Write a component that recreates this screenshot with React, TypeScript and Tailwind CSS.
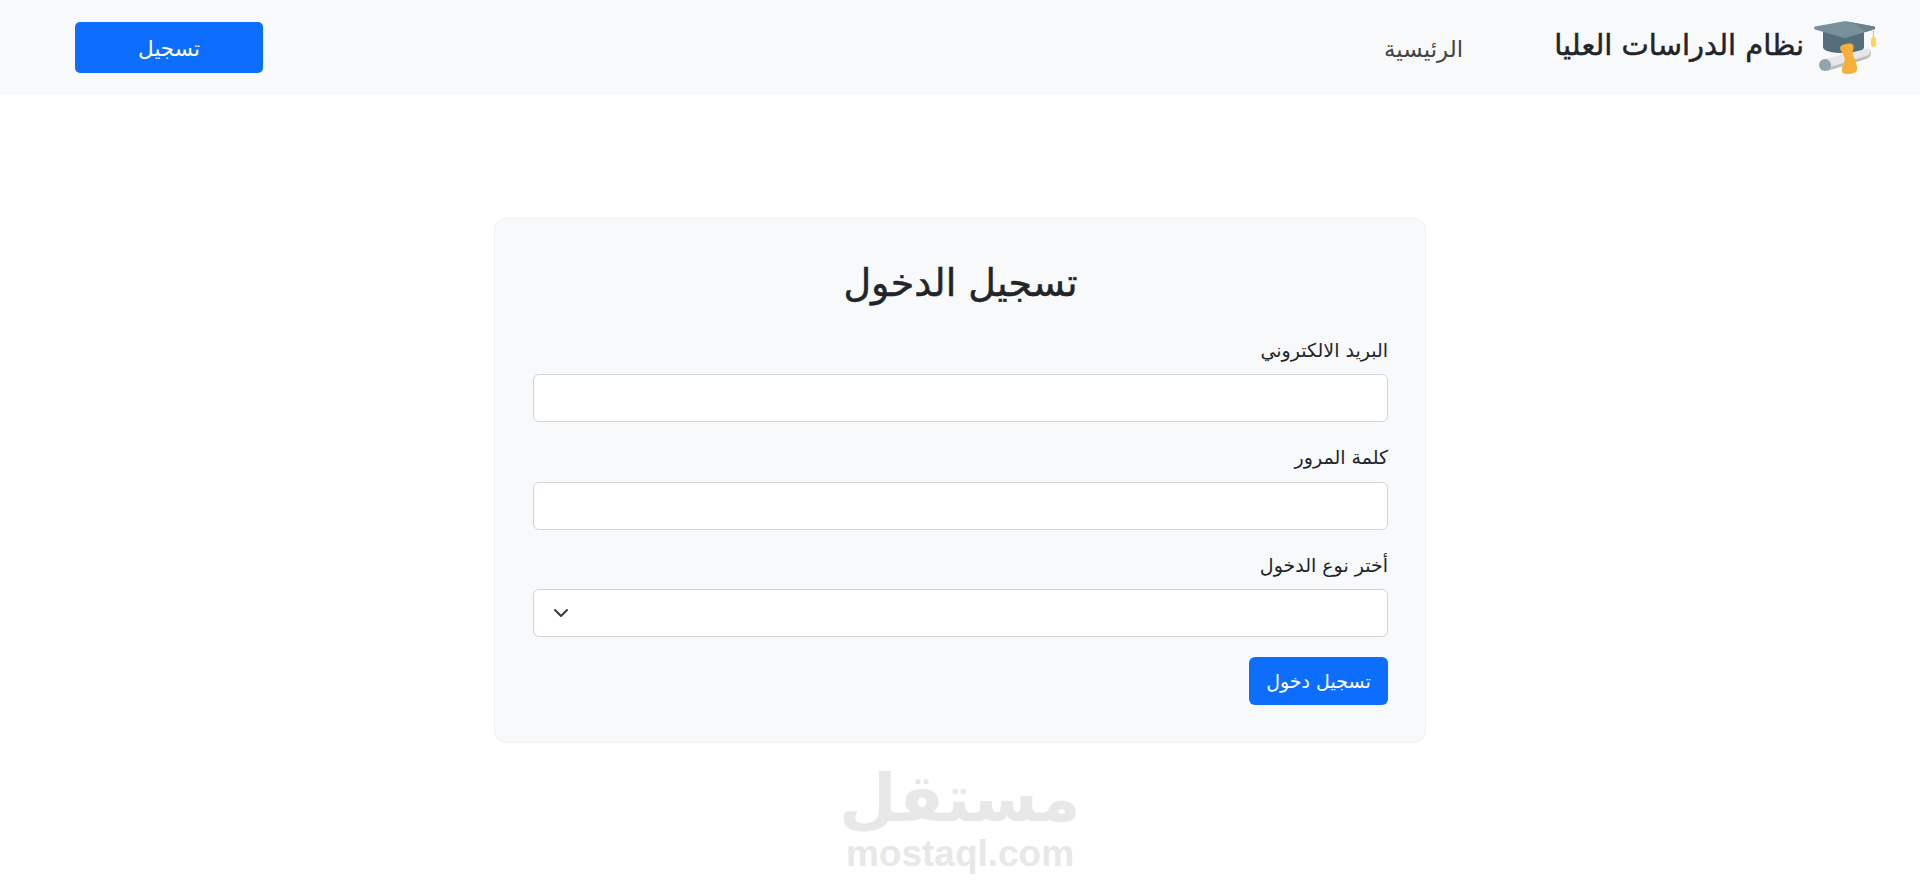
const font = "font-['DejaVu_Sans','Noto_Sans',sans-serif]";

function CapIcon() {
  return (
    <svg width="62" height="54" viewBox="0 0 62 54" className="shrink-0 mt-[1px]">
      <path d="M9 11v15c0 4 9 6 21 6s20-2 20-6V11z" fill="#546e7a" />
      <path d="M1 5.500 29 .5c1.500-.3 3-.3 4.500 0L60 5.500c1.500.5 1.500 2.500 0 3L33 16.500c-1.500.5-3 .5-4.500 0L1 8.500c-1.300-.5-1.300-2.500 0-3z" fill="#78909c" />
      <path d="M33.500.5 60 5.500c1.500.5 1.500 2.500 0 3l-9 2.700C47 6 41 2.500 33.500.5z" fill="#6b838f" />
      <path d="M59.500 8v9" stroke="#ffca28" strokeWidth="1.2" />
      <rect x="57" y="16" width="5" height="10" rx="2.500" fill="#ffd54f" />
      <path d="M11 38 52 28c3-.7 5 1 5 4s-2 5-5 6L13 50z" fill="#e6e6e6" />
      <path d="M13 50 52 38c3-1 5-3 5-6 0-1 0-2-.5-2.500 0 3-2 5-4.500 5.500L13 47z" fill="#bdbdbd" />
      <circle cx="11" cy="44" r="6" fill="#90a4ae" />
      <path d="M27 25c2-2 8-3 11-2 2 1 2 4 1 6-1 3 0 6 2 10 2 5 3 10 1 12-3 2-10 3-13 1-2-2-1-6 1-10 1-3 1-6-1-9-2-3-4-6-2-8z" fill="#f5b03a" />
    </svg>
  );
}

function Field({ label, children }: { label: string; children: React.ReactNode }) {
  return (
    <div className="mb-[16px]">
      <label className="block mb-[5.5px] text-[19px] leading-[38px] text-[#212529]">{label}</label>
      {children}
    </div>
  );
}

export default function App() {
  return (
    <div dir="rtl" className={`${font} min-h-[892px] bg-white text-[#212529] overflow-hidden`}>
      <nav className="h-[95px] bg-[#f8f9fa] flex items-center justify-between pr-[44px] pl-[75px]">
        <div className="flex items-center">
          <a className="flex items-center gap-[10px] text-[29px] text-[#212529] [-webkit-text-stroke:0.5px_#212529]">
            <CapIcon />
            <span className="mb-[4px]">نظام الدراسات العليا</span>
          </a>
          <a className="mr-[91px] text-[23px] text-[#444] mt-[4px]">الرئيسية</a>
        </div>
        <button className="w-[188px] h-[51px] pt-[3px] rounded-[5px] bg-[#0d6efd] text-white text-[21.5px]">تسجيل</button>
      </nav>

      <main className="flex flex-col items-center pt-[123px]">
        <form className="w-[932px] h-[525px] bg-[#f8f9fa] border border-[#eff0f1] rounded-[12px] pl-[38px] pr-[37px] pt-[42px]">
          <h1 className="text-center text-[38px] leading-[44px] mb-[25.5px] [-webkit-text-stroke:0.5px_#212529]">تسجيل الدخول</h1>
          <Field label="البريد الالكتروني">
            <input className="block w-full h-[48px] bg-white border border-[#ced4da] rounded-[6px]" />
          </Field>
          <Field label="كلمة المرور">
            <input type="password" className="block w-full h-[48px] bg-white border border-[#ced4da] rounded-[6px]" />
          </Field>
          <Field label="أختر نوع الدخول">
            <div className="flex items-center justify-end w-full h-[48px] bg-white border border-[#ced4da] rounded-[6px] pl-[19px]">
              <svg width="16" height="16" viewBox="0 0 16 16">
                <path d="M2 5l6 6 6-6" fill="none" stroke="#343a40" strokeWidth="2" strokeLinecap="round" strokeLinejoin="round" />
              </svg>
            </div>
          </Field>
          <button type="button" className="h-[48px] w-[139px] mt-[4px] rounded-[6px] bg-[#0d6efd] text-white text-[19px]">تسجيل دخول</button>
        </form>

        <div className="mt-[21px] flex flex-col items-center text-[#e8e8e8] select-none">
          <span dir="rtl" className="text-[66px] leading-[70px] font-bold">مستقل</span>
          <span dir="ltr" className="mt-[2px] font-['Liberation_Sans',sans-serif] font-bold text-[37px] leading-[36px]">mostaql.com</span>
        </div>
      </main>
    </div>
  );
}
